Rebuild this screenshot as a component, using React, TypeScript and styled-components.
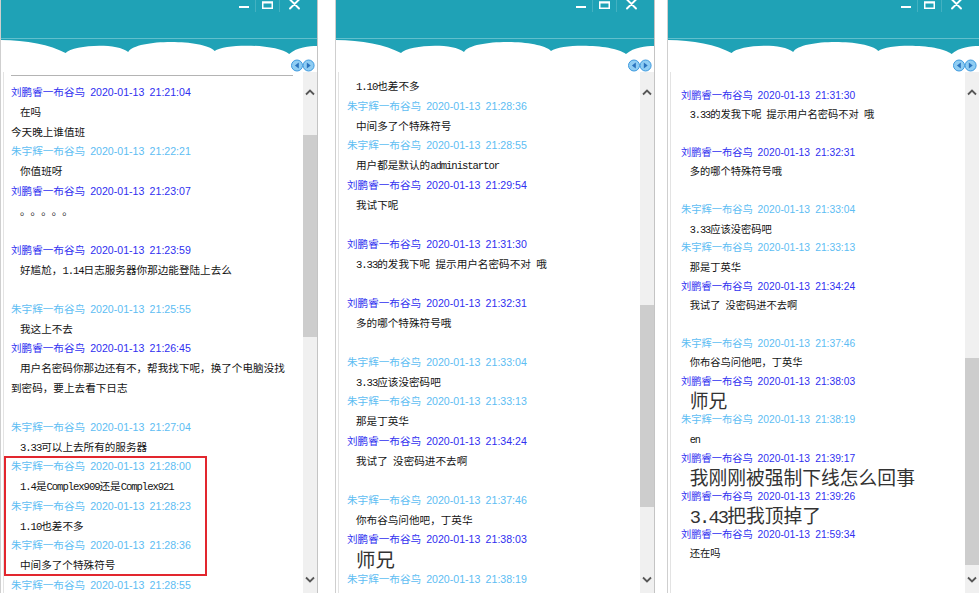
import React from 'react';
import styled, { createGlobalStyle } from 'styled-components';

const GlobalStyle = createGlobalStyle`
  html, body { margin: 0; padding: 0; background: #ffffff; }
  body { font-family: "Liberation Sans", "Noto Sans CJK SC", sans-serif; }
  #root { width: 979px; height: 593px; overflow: hidden; }
`;

const Stage = styled.div`
  display: flex;
  align-items: flex-start;
  width: 979px;
  height: 593px;
  overflow: hidden;
  background: #ffffff;
`;

const Window = styled.section<{ $width: number; $offset: number; $scale: number }>`
  --s: ${p => p.$scale};
  flex: none;
  box-sizing: border-box;
  width: ${p => p.$width}px;
  margin-left: ${p => p.$offset}px;
  height: 593px;
  display: flex;
  flex-direction: column;
  border-left: 1px solid #cfcfcf;
  border-right: 1px solid #c4c4c4;
  background: #ffffff;
  overflow: hidden;
`;

const Header = styled.header`
  flex: none;
  height: 72px;
  display: flex;
  flex-direction: column;
  background: #ffffff;
`;

const TitleBar = styled.div`
  flex: none;
  box-sizing: border-box;
  height: 39px;
  background: #1fa2b6;
  border-bottom: 1px solid #62bfcc;
  display: flex;
  justify-content: flex-end;
  align-items: flex-start;
  padding-right: 9px;
`;

const ControlButton = styled.div<{ $w: number; $sep?: boolean }>`
  box-sizing: border-box;
  width: ${p => p.$w}px;
  height: 12px;
  display: flex;
  justify-content: center;
  align-items: flex-start;
  border-left: ${p => (p.$sep ? '1px solid rgba(255,255,255,0.16)' : 'none')};
`;

const CloudBand = styled.svg`
  display: block;
  flex: none;
  width: 100%;
  height: 19px;
`;

const NavRow = styled.div`
  flex: 1;
  display: flex;
  justify-content: flex-end;
  align-items: center;
  padding-right: 2px;
`;

const Body = styled.div`
  flex: 1;
  min-height: 0;
  display: flex;
`;

const Transcript = styled.div<{ $top: number; $left: number }>`
  flex: 1;
  min-width: 0;
  margin-left: 2px;
  border-left: 1px solid #e3e3e3;
  padding: ${p => p.$top}px 0 0 ${p => p.$left}px;
  overflow: hidden;
`;

const Divider = styled.div`
  width: 282px;
  height: 1px;
  background: #b4b4b4;
  margin-bottom: 6px;
`;

const HeadRow = styled.div<{ $who: 'L' | 'Z' }>`
  height: calc(20px * var(--s));
  line-height: calc(20px * var(--s));
  font-family: "Liberation Sans", "Noto Sans CJK SC", sans-serif;
  font-size: calc(10.6px * var(--s));
  color: ${p => (p.$who === 'L' ? '#3030f0' : '#5dbdf3')};
  white-space: nowrap;
`;

const Stamp = styled.span`
  margin-left: calc(5px * var(--s));
  word-spacing: 2.3px;
`;

const TextBlock = styled.div<{ $big?: boolean }>`
  font-family: "Noto Sans CJK SC", sans-serif;
  font-size: calc(${p => (p.$big ? 19.4 : 10.6)}px * var(--s));
  color: ${p => (p.$big ? '#333333' : '#141414')};
  text-spacing-trim: space-all;
`;

const Line = styled.div`
  height: calc(19.5px * var(--s));
  line-height: calc(19.5px * var(--s));
  padding-left: calc(9px * var(--s));
  white-space: pre;
  &:not(:first-child) {
    padding-left: 0;
  }
`;

const Latin = styled.span`
  font-family: "Liberation Mono", monospace;
  letter-spacing: -0.1em;
`;

const Gap = styled.div`
  height: calc(19.5px * var(--s));
`;

const Marked = styled.div`
  position: relative;
  &::after {
    content: '';
    position: absolute;
    top: 0;
    bottom: -1px;
    left: -7px;
    width: 203px;
    box-sizing: border-box;
    border: 2px solid #e2262e;
    pointer-events: none;
  }
`;

const Scrollbar = styled.div`
  flex: none;
  width: 14px;
  background: #f0f0f0;
  display: flex;
  flex-direction: column;
`;

const ArrowButton = styled.div<{ $h: number }>`
  flex: none;
  height: ${p => p.$h}px;
  display: flex;
  align-items: center;
  justify-content: center;
`;

const Track = styled.div`
  flex: 1;
  min-height: 0;
  display: flex;
  flex-direction: column;
`;

const Thumb = styled.div<{ $top: number; $h: number }>`
  flex: none;
  margin-top: ${p => p.$top}px;
  height: ${p => p.$h}px;
  background: #cdcdcd;
`;

type Who = 'L' | 'Z';
type Item =
  | { k: 'hr' }
  | { k: 'h'; who: Who; time: string }
  | { k: 't'; lines: string[]; big?: boolean }
  | { k: 'gap' }
  | { k: 'mark'; items: Item[] };

const NAMES: Record<Who, string> = {
  L: '刘鹏睿一布谷鸟',
  Z: '朱宇辉一布谷鸟',
};

const h = (who: Who, time: string): Item => ({ k: 'h', who, time });
const t = (...lines: string[]): Item => ({ k: 't', lines });
const big = (...lines: string[]): Item => ({ k: 't', lines, big: true });
const gap: Item = { k: 'gap' };

const panel1: Item[] = [
  { k: 'hr' },
  h('L', '21:21:04'),
  t('在吗', '今天晚上谁值班'),
  h('Z', '21:22:21'),
  t('你值班呀'),
  h('L', '21:23:07'),
  t('。。。。。'),
  gap,
  h('L', '21:23:59'),
  t('好尴尬，1.14日志服务器你那边能登陆上去么'),
  gap,
  h('Z', '21:25:55'),
  t('我这上不去'),
  h('L', '21:26:45'),
  t('用户名密码你那边还有不，帮我找下呢，换了个电脑没找', '到密码，要上去看下日志'),
  gap,
  h('Z', '21:27:04'),
  t('3.33可以上去所有的服务器'),
  {
    k: 'mark',
    items: [
      h('Z', '21:28:00'),
      t('1.4是Complex909还是Complex921'),
      h('Z', '21:28:23'),
      t('1.10也差不多'),
      h('Z', '21:28:36'),
      t('中间多了个特殊符号'),
    ],
  },
  h('Z', '21:28:55'),
];

const panel2: Item[] = [
  t('1.10也差不多'),
  h('Z', '21:28:36'),
  t('中间多了个特殊符号'),
  h('Z', '21:28:55'),
  t('用户都是默认的administartor'),
  h('L', '21:29:54'),
  t('我试下呢'),
  gap,
  h('L', '21:31:30'),
  t('3.33的发我下呢 提示用户名密码不对 哦'),
  gap,
  h('L', '21:32:31'),
  t('多的哪个特殊符号哦'),
  gap,
  h('Z', '21:33:04'),
  t('3.33应该没密码吧'),
  h('Z', '21:33:13'),
  t('那是丁英华'),
  h('L', '21:34:24'),
  t('我试了 没密码进不去啊'),
  gap,
  h('Z', '21:37:46'),
  t('你布谷鸟问他吧，丁英华'),
  h('L', '21:38:03'),
  big('师兄'),
  h('Z', '21:38:19'),
];

const panel3: Item[] = [
  h('L', '21:31:30'),
  t('3.33的发我下呢 提示用户名密码不对 哦'),
  gap,
  h('L', '21:32:31'),
  t('多的哪个特殊符号哦'),
  gap,
  h('Z', '21:33:04'),
  t('3.33应该没密码吧'),
  h('Z', '21:33:13'),
  t('那是丁英华'),
  h('L', '21:34:24'),
  t('我试了 没密码进不去啊'),
  gap,
  h('Z', '21:37:46'),
  t('你布谷鸟问他吧，丁英华'),
  h('L', '21:38:03'),
  big('师兄'),
  h('Z', '21:38:19'),
  t('en'),
  h('L', '21:39:17'),
  big('我刚刚被强制下线怎么回事'),
  h('L', '21:39:26'),
  big('3.43把我顶掉了'),
  h('L', '21:59:34'),
  t('还在吗'),
];

function renderLine(line: string): React.ReactNode[] {
  return line
    .split(/([\x20-\x7e]+)/)
    .filter(part => part.length > 0)
    .map((part, i) => (/^[\x20-\x7e]+$/.test(part) ? <Latin key={i}>{part}</Latin> : part));
}

function renderItems(items: Item[]): React.ReactNode[] {
  return items.map((it, i) => {
    switch (it.k) {
      case 'hr':
        return <Divider key={i} />;
      case 'h':
        return (
          <HeadRow key={i} $who={it.who}>
            {NAMES[it.who]}
            <Stamp>2020-01-13 {it.time}</Stamp>
          </HeadRow>
        );
      case 't':
        return (
          <TextBlock key={i} $big={it.big}>
            {it.lines.map((line, j) => (
              <Line key={j}>{renderLine(line)}</Line>
            ))}
          </TextBlock>
        );
      case 'gap':
        return <Gap key={i} />;
      case 'mark':
        return <Marked key={i}>{renderItems(it.items)}</Marked>;
    }
  });
}

const MinimizeIcon = () => (
  <svg width="10" height="10" viewBox="0 0 10 10">
    <rect x="0" y="6" width="10" height="2" fill="#ffffff" />
  </svg>
);

const MaximizeIcon = () => (
  <svg width="11" height="10" viewBox="0 0 11 10">
    <rect x="0.75" y="2.25" width="9.5" height="6" fill="none" stroke="#ffffff" strokeWidth="1.5" />
    <rect x="0" y="1.5" width="11" height="2" fill="#ffffff" />
  </svg>
);

const CloseIcon = () => (
  <svg width="11" height="10" viewBox="0 0 11 10">
    <path d="M1 -0.5 L10 8.5 M10 -0.5 L1 8.5" stroke="#ffffff" strokeWidth="1.9" strokeLinecap="round" />
  </svg>
);

const Clouds = () => (
  <CloudBand viewBox="0 0 318 19" preserveAspectRatio="none">
    <rect x="0" y="0" width="318" height="19" fill="#1fa2b6" />
    <path
      d="M0 1 C25 1 50 6 65 14 C72 6 116 3 128 13 C136 0 203 0 215 12 C226 4 278 5 290 15 C298 8 310 7 318 7 L318 19 L0 19 Z"
      fill="#ffffff"
    />
  </CloudBand>
);

const NavArrows = () => (
  <svg width="24" height="13" viewBox="0 0 24 13">
    <circle cx="6" cy="6.5" r="5.5" fill="#8fcdf3" stroke="#3f9ade" strokeWidth="1" />
    <path d="M7.8 3.6 L3.9 6.5 L7.8 9.4 Z" fill="#2a73bd" />
    <circle cx="17.6" cy="6.5" r="5.5" fill="#8fcdf3" stroke="#3f9ade" strokeWidth="1" />
    <path d="M15.8 3.6 L19.7 6.5 L15.8 9.4 Z" fill="#2a73bd" />
  </svg>
);

const Chevron = ({ down }: { down?: boolean }) => (
  <svg width="10" height="7" viewBox="0 0 10 7">
    <polyline
      points={down ? '1,1.5 5,5.5 9,1.5' : '1,5.5 5,1.5 9,5.5'}
      fill="none"
      stroke="#575757"
      strokeWidth="1.8"
    />
  </svg>
);

type PanelProps = {
  width: number;
  offset: number;
  scale: number;
  top: number;
  left: number;
  thumbTop: number;
  thumbHeight: number;
  items: Item[];
};

const ChatWindow = ({ width, offset, scale, top, left, thumbTop, thumbHeight, items }: PanelProps) => (
  <Window $width={width} $offset={offset} $scale={scale}>
    <Header>
      <TitleBar>
        <ControlButton $w={23}>
          <MinimizeIcon />
        </ControlButton>
        <ControlButton $w={24} $sep>
          <MaximizeIcon />
        </ControlButton>
        <ControlButton $w={29} $sep>
          <CloseIcon />
        </ControlButton>
      </TitleBar>
      <Clouds />
      <NavRow>
        <NavArrows />
      </NavRow>
    </Header>
    <Body>
      <Transcript $top={top} $left={left}>
        {renderItems(items)}
      </Transcript>
      <Scrollbar>
        <ArrowButton $h={40}>
          <Chevron />
        </ArrowButton>
        <Track>
          <Thumb $top={thumbTop} $h={thumbHeight} />
        </Track>
        <ArrowButton $h={28}>
          <Chevron down />
        </ArrowButton>
      </Scrollbar>
    </Body>
  </Window>
);

export default function App() {
  return (
    <>
      <GlobalStyle />
      <Stage>
        <ChatWindow width={318} offset={0} scale={1} top={3} left={7} thumbTop={23} thumbHeight={202} items={panel1} />
        <ChatWindow width={320} offset={17} scale={1} top={4} left={8} thumbTop={193} thumbHeight={202} items={panel2} />
        <ChatWindow width={313} offset={12} scale={0.968} top={14} left={10} thumbTop={246} thumbHeight={207} items={panel3} />
      </Stage>
    </>
  );
}
